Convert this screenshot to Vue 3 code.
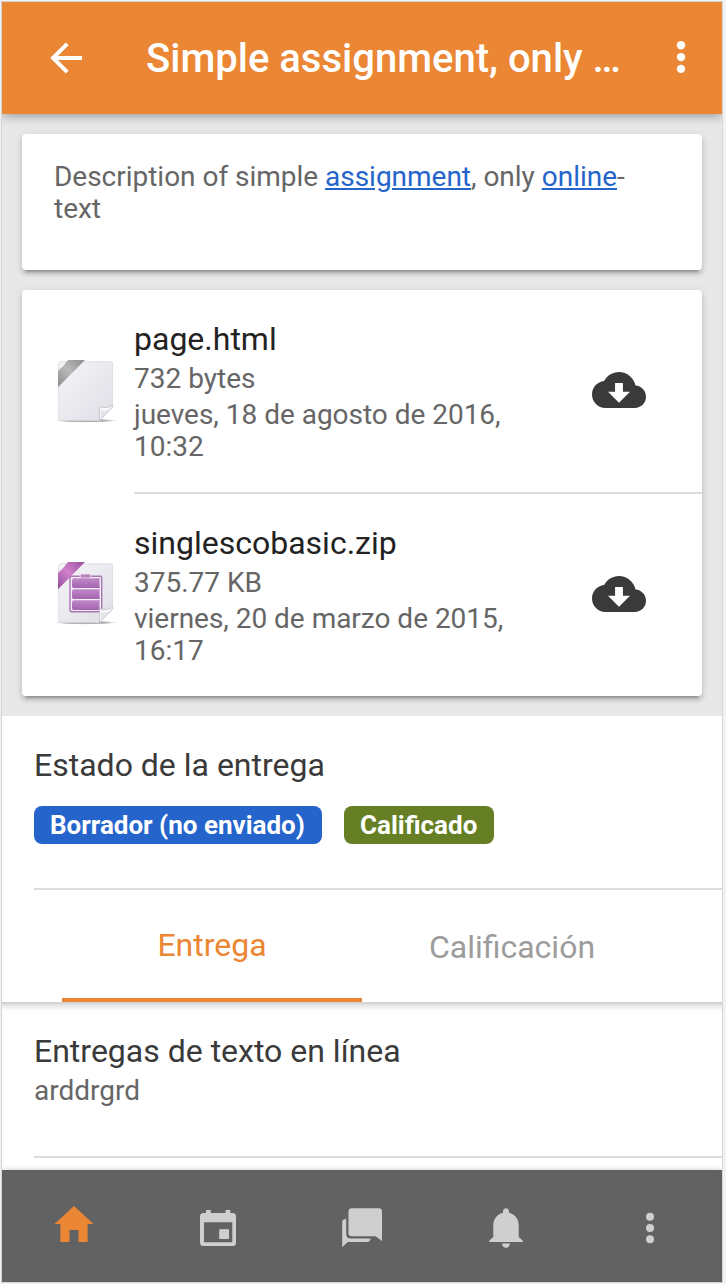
<script setup>
import { ref } from 'vue'

const files = [
  { name: 'page.html', size: '732 bytes', date: 'jueves, 18 de agosto de 2016, 10:32', type: 'html' },
  { name: 'singlescobasic.zip', size: '375.77 KB', date: 'viernes, 20 de marzo de 2015, 16:17', type: 'zip' }
]
const tabs = ['Entrega', 'Calificación']
const activeTab = ref(0)
</script>

<template>
  <div class="screen">
    <div class="phone">
      <header class="toolbar">
        <button class="back">
          <svg width="34" height="34" viewBox="0 0 34 34" fill="none" stroke="#fff" stroke-width="4">
            <path d="M33 17H5" />
            <path d="M18.2 2.800L4 17L18.2 31.200" />
          </svg>
        </button>
        <h1>Simple assignment, only …</h1>
        <button class="more">
          <svg width="10" height="34" viewBox="0 0 10 34" fill="#fff">
            <circle cx="5" cy="4.3" r="4.2" />
            <circle cx="5" cy="16.1" r="4.2" />
            <circle cx="5" cy="27.9" r="4.2" />
          </svg>
        </button>
      </header>

      <main class="content">
        <section class="cards">
          <div class="card description">
            <p>Description of simple <a>assignment</a>, only <a>online</a>-text</p>
          </div>
          <div class="card">
            <div v-for="file in files" :key="file.name" class="file">
              <svg class="file-icon" width="64" height="66" viewBox="0 0 64 66">
                <defs>
                  <linearGradient :id="'page-' + file.type" x1="0" y1="0" x2="1" y2="1">
                    <stop offset="0" stop-color="#f5f5f8" />
                    <stop offset="1" stop-color="#dedee6" />
                  </linearGradient>
                  <linearGradient :id="'ribbon-' + file.type" x1="0" y1="1" x2="1" y2="0">
                    <stop offset="0" :stop-color="file.type === 'zip' ? '#96509f' : '#8c8c8c'" />
                    <stop offset=".5" :stop-color="file.type === 'zip' ? '#cf80c8' : '#b9b9b9'" />
                    <stop offset="1" :stop-color="file.type === 'zip' ? '#96509f' : '#8c8c8c'" />
                  </linearGradient>
                  <linearGradient id="books" x1="0" y1="0" x2="0" y2="1">
                    <stop offset="0" stop-color="#bf88c8" />
                    <stop offset="1" stop-color="#a463b0" />
                  </linearGradient>
                  <radialGradient :id="'shade-' + file.type">
                    <stop offset="0" stop-color="#999" />
                    <stop offset=".7" stop-color="#bbb" />
                    <stop offset="1" stop-color="#fff" />
                  </radialGradient>
                </defs>
                <ellipse cx="32" cy="62.6" rx="31" ry="2" :fill="`url(#shade-${file.type})`" />
                <path d="M6 3.8H56.5Q58.6 3.8 58.6 6V49L46 62.4H6.5Q4.7 62.4 4.7 60.5V5Z" :fill="`url(#page-${file.type})`" stroke="#d5d5da" stroke-width=".7" />
                <template v-if="file.type === 'zip'">
                  <rect x="16" y="16.3" width="31.7" height="35.5" rx="1.5" fill="#f2eef5" stroke="#a974b4" stroke-width="1.4" />
                  <rect x="26.2" y="14" width="10.6" height="4" fill="#b882bd" stroke="#f2eef5" stroke-width=".8" />
                  <path v-for="y in [18.3, 29.3, 40.3]" :key="y" :transform="`translate(18 ${y})`" d="M2 0H28.3L27.5 1.2V8.6L28.3 9.8H2Q0 9.8 0 7.6V2.2Q0 0 2 0Z" fill="url(#books)" />
                </template>
                <path d="M45.5 62.4V50Q46 47.6 48.6 49.6Q53.6 50.2 58.8 47.4V48.6Z" fill="#f9f9fb" stroke="#b9b9c0" stroke-width=".7" />
                <path d="M47 60.3V52.5Q50 53.500 55 51.500Z" fill="#e2e2e8" />
                <path d="M14 2H31L4 29.3V13Q9 9 14 2Z" :fill="`url(#ribbon-${file.type})`" />
              </svg>
              <div class="file-info">
                <h2>{{ file.name }}</h2>
                <p class="size">{{ file.size }}</p>
                <p class="date">{{ file.date }}</p>
              </div>
              <button class="download">
                <svg width="54" height="36" viewBox="0 4 24 16" fill="#3a3a3a">
                  <path d="M19.35 10.04C18.67 6.59 15.64 4 12 4 9.11 4 6.6 5.64 5.35 8.04 2.34 8.36 0 10.91 0 14c0 3.31 2.69 6 6 6h13c2.76 0 5-2.24 5-5 0-2.64-2.05-4.78-4.65-4.96zM16.9 12.8L12 17.7 7.1 12.8H10.25V8.9H13.75V12.8z" />
                </svg>
              </button>
            </div>
          </div>
        </section>

        <section class="status">
          <h2>Estado de la entrega</h2>
          <div class="badges">
            <span class="badge blue">Borrador (no enviado)</span>
            <span class="badge green">Calificado</span>
          </div>
        </section>

        <nav class="tabs">
          <button v-for="(tab, i) in tabs" :key="tab" :class="{ active: activeTab === i }" @click="activeTab = i">{{ tab }}</button>
        </nav>

        <section class="online-text">
          <h2>Entregas de texto en línea</h2>
          <p>arddrgrd</p>
        </section>
      </main>

      <footer class="tabbar">
        <button>
          <svg class="home" width="48" height="48" viewBox="0 0 512 512" fill="#ea8634">
            <path d="M208 448V320h96v128h97.6V256H464L256 64 48 256h62.4v192z" />
          </svg>
        </button>
        <button>
          <svg width="48" height="48" viewBox="0 0 48 48" fill="#cfcfcf">
            <path fill-rule="evenodd" d="M12 6H16.8V9H31.5V6H36.2V9H38.5Q42 9 42 12.5V38.5Q42 42 38.5 42H9.5Q6 42 6 38.5V12.5Q6 9 9.5 9H12ZM10 18.3V38.2H38.3V18.3Z" />
            <rect x="25.2" y="25.2" width="9.8" height="9.8" />
          </svg>
        </button>
        <button>
          <svg width="48" height="48" viewBox="0 0 48 48" fill="#cfcfcf">
            <path d="M14 4.3H40.8Q44 4.3 44 7.5V37L37.5 32.3H14Q10.5 32.3 10.5 29V7.5Q10.5 4.3 14 4.3Z" />
            <path d="M8.2 15V30Q8.2 34.5 12.5 34.5H32.7Q32 38 28.7 38H9.7L4.2 43.3V18Q4.2 15 8.2 15Z" />
          </svg>
        </button>
        <button>
          <svg width="48" height="48" viewBox="0 0 48 48" fill="#cfcfcf">
            <path d="M24 4.3C22.2 4.3 21 5.6 21 7.4V8.8C14.9 10.2 11.3 15 11.3 21.3V33L7.3 36.5V38H40.7V36.5L36.7 33V21.3C36.7 15 33.1 10.2 27 8.8V7.4C27 5.6 25.8 4.3 24 4.3Z" />
            <path d="M20 39.5H28Q27.3 43.8 24 43.8T20 39.5Z" />
          </svg>
        </button>
        <button>
          <svg width="48" height="48" viewBox="0 0 48 48" fill="#cfcfcf">
            <circle cx="24" cy="12.8" r="4" />
            <circle cx="24" cy="24" r="4" />
            <circle cx="24" cy="35.3" r="4" />
          </svg>
        </button>
      </footer>
    </div>
  </div>
</template>

<style>
body { margin: 0; background: #f2f2f2; }
</style>

<style scoped>
* { box-sizing: border-box; margin: 0; }
.screen { width: 726px; height: 1284px; padding: 1px; background: #f2f2f2; font-family: Roboto, sans-serif; overflow: hidden; }
.phone { width: 722px; height: 1282px; border: 1px solid #d4d4d4; background: #fff; display: flex; flex-direction: column; overflow: hidden; }
button { display: flex; align-items: center; justify-content: center; padding: 0; border: none; background: none; font-family: inherit; cursor: pointer; }
svg { display: block; flex: none; }

.toolbar { height: 112px; flex: none; display: flex; align-items: center; padding: 0 36px 0 47px; background: #ea8634; color: #fff; box-shadow: 0 2px 10px rgba(0,0,0,0.35); z-index: 2; }
.toolbar h1 { flex: 1; padding: 2px 0 0 63px; font-size: 40px; line-height: 48px; font-weight: 500; white-space: nowrap; }

.content { flex: 1; min-height: 0; }
.cards { display: flex; flex-direction: column; gap: 20px; padding: 20px; background: #e8e8e8; }
.card { border-radius: 4px; background: #fff; box-shadow: 0 4px 4px 0 rgba(0,0,0,0.14), 0 6px 2px -4px rgba(0,0,0,0.2), 0 2px 10px 0 rgba(0,0,0,0.12); }
.description { height: 136px; padding: 27px 32px; }
.description p { max-width: 600px; font-size: 28px; line-height: 32px; letter-spacing: -0.02px; color: #666; }
.description a { color: #2565cb; text-decoration: underline; }

.file { display: flex; align-items: flex-start; height: 202px; padding-left: 32px; }
.file:first-child { height: 204px; }
.file-icon { margin-top: 66px; }
.file:first-child .file-icon { margin-top: 68px; }
.file-info { flex: 1; height: 100%; margin-left: 16px; padding-top: 29px; font-size: 28px; color: #666; }
.file-info h2 { font-size: 32px; line-height: 40px; font-weight: 400; color: #222; }
.size { line-height: 39px; }
.date { max-width: 400px; margin-top: 1px; line-height: 32px; letter-spacing: -0.02px; }
.download { width: 110px; height: 100%; padding: 0 56px 2px 0; }
.file:first-child .file-info, .file:first-child .download { border-bottom: 2px solid #dedede; }

.status { height: 172px; margin-left: 32px; padding-top: 29px; }
.status h2, .online-text h2 { font-size: 32px; line-height: 40px; font-weight: 400; color: #3a3a3a; }
.badges { display: flex; gap: 22px; margin-top: 21px; }
.badge { height: 38px; padding: 0 16px; border-radius: 8px; font-size: 26px; line-height: 38px; font-weight: 700; color: #fff; white-space: nowrap; }
.blue { width: 288px; background: #2565cb; }
.green { width: 150px; background: #667f24; }

.tabs { display: flex; height: 114px; padding: 0 60px; background: linear-gradient(#dedede, #dedede) 32px 0 / 100% 2px no-repeat #fff; }
.tabs button { width: 300px; padding-top: 4px; font-size: 32px; color: #9c9c9c; }
.tabs .active { color: #ea8634; border-bottom: 4px solid #ea8634; }

.online-text { height: 156px; padding: 29px 0 0 32px; background: linear-gradient(#dedede, #dedede) 32px 100% / 100% 2px no-repeat, linear-gradient(#ccc, #e6e6e6 35%, #fff) 0 0 / 100% 9px no-repeat; }
.online-text p { margin-top: 4px; font-size: 28px; line-height: 32px; color: #666; }

.tabbar { height: 112px; flex: none; display: flex; background: #626262; box-shadow: 0 0 5px rgba(0,0,0,0.22); z-index: 2; }
.tabbar button { flex: 1; padding-top: 4px; }
.home { margin-bottom: 8px; }
</style>
